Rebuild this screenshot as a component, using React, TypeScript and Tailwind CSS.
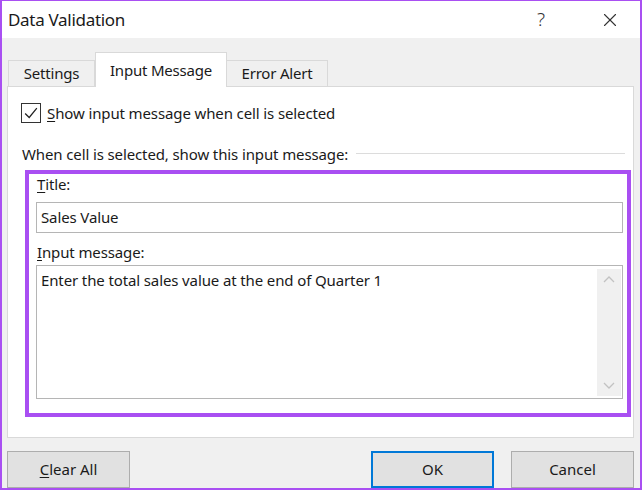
import { X } from "lucide-react";

const font = { fontFamily: '"Noto Sans", "Open Sans", sans-serif' };

const Ul = ({ children }: { children: string }) => (
  <span className="underline underline-offset-2 decoration-1">{children}</span>
);

const Button = ({
  children,
  className = "",
}: {
  children: React.ReactNode;
  className?: string;
}) => (
  <button
    className={`flex h-[37px] w-[123px] items-center justify-center bg-[#e1e1e1] text-[15px] text-[#1a1a1a] ${className}`}
  >
    {children}
  </button>
);

export default function App() {
  return (
    <div
      style={font}
      className="flex h-[490px] w-[642px] flex-col overflow-hidden border-x-2 border-t border-b-2 border-[#a94ff2] bg-[#f0f0f0] text-[#1a1a1a]"
    >
      {/* title bar */}
      <div className="flex h-[37px] shrink-0 items-center bg-white pl-[6px]">
        <span className="text-[17px] tracking-[-0.3px]">Data Validation</span>
        <span className="ml-auto mr-[54px] text-[19px] font-light text-[#333]">?</span>
        <X className="mr-[19px] size-[22px] text-[#333]" strokeWidth={1.2} />
      </div>

      {/* tabs */}
      <div className="mt-[14px] flex h-[34px] shrink-0 items-end pl-[6px]">
        <div className="flex h-[26px] w-[87px] items-center justify-center border border-b-0 border-[#d9d9d9] text-[15px] tracking-[-0.2px]">
          Settings
        </div>
        <div className="relative z-10 -mb-px flex h-[35px] w-[132px] items-center justify-center border border-b-0 border-[#d9d9d9] bg-white text-[15px] tracking-[-0.2px]">
          Input Message
        </div>
        <div className="flex h-[26px] w-[101px] items-center justify-center border border-b-0 border-l-0 border-[#d9d9d9] text-[15px] tracking-[-0.2px]">
          Error Alert
        </div>
      </div>

      {/* panel */}
      <div className="ml-[5px] mr-[6px] flex h-[352px] shrink-0 flex-col border border-[#d9d9d9] bg-white pl-[13px] pr-[2px] pt-[15px] text-[15px] tracking-[-0.12px]">
        <div className="flex items-center">
          <div className="flex size-[20px] items-center justify-center border border-[#333] bg-white">
            <svg viewBox="0 0 20 20" className="size-[18px]">
              <path d="M3.5 10.5 L8 15 L16.5 4.5" fill="none" stroke="#222" strokeWidth="1.4" />
            </svg>
          </div>
          <span className="ml-[6px]">
            <Ul>S</Ul>how input message when cell is selected
          </span>
        </div>

        <div className="mt-[18px] flex items-center pr-[6px]">
          <span className="ml-px">When cell is selected, show this input message:</span>
          <div className="ml-[8px] h-px flex-1 bg-[#dcdcdc]" />
        </div>

        <div className="ml-[4px] mt-[5px] flex h-[247px] flex-col border-4 border-[#a94ff2] pl-[7px] pr-[4px]">
          <div className="flex h-[20px] items-center pl-[1px]">
            <span>
              <Ul>T</Ul>itle:
            </span>
          </div>
          <div className="mt-[8px] flex h-[31px] items-center border border-[#b5b5b5] pl-[4px]">
            Sales Value
          </div>
          <div className="mt-[9px] flex h-[20px] items-center pl-[1px]">
            <span>
              <Ul>I</Ul>nput message:
            </span>
          </div>
          <div className="mt-[3px] flex h-[134px] border border-[#b5b5b5] pl-[4px] pt-[3px]">
            <span className="flex-1">Enter the total sales value at the end of Quarter 1</span>
            <div className="mb-[2px] mr-[1px] flex w-[24px] flex-col items-center justify-between bg-[#f0f0f0] py-[6px]">
              <svg viewBox="0 0 12 8" className="h-[8px] w-[12px]">
                <path d="M1 7 L6 2 L11 7" fill="none" stroke="#c2c2c2" strokeWidth="1.3" />
              </svg>
              <svg viewBox="0 0 12 8" className="h-[8px] w-[12px]">
                <path d="M1 1 L6 6 L11 1" fill="none" stroke="#c2c2c2" strokeWidth="1.3" />
              </svg>
            </div>
          </div>
        </div>
      </div>

      {/* buttons */}
      <div className="mt-[13px] flex shrink-0 pl-[5px] pr-[6px]">
        <Button className="border border-[#adadad]">
          <span>
            <Ul>C</Ul>lear All
          </span>
        </Button>
        <Button className="ml-auto border-2 border-[#0078d7]">OK</Button>
        <Button className="ml-[17px] border border-[#adadad]">Cancel</Button>
      </div>
    </div>
  );
}
